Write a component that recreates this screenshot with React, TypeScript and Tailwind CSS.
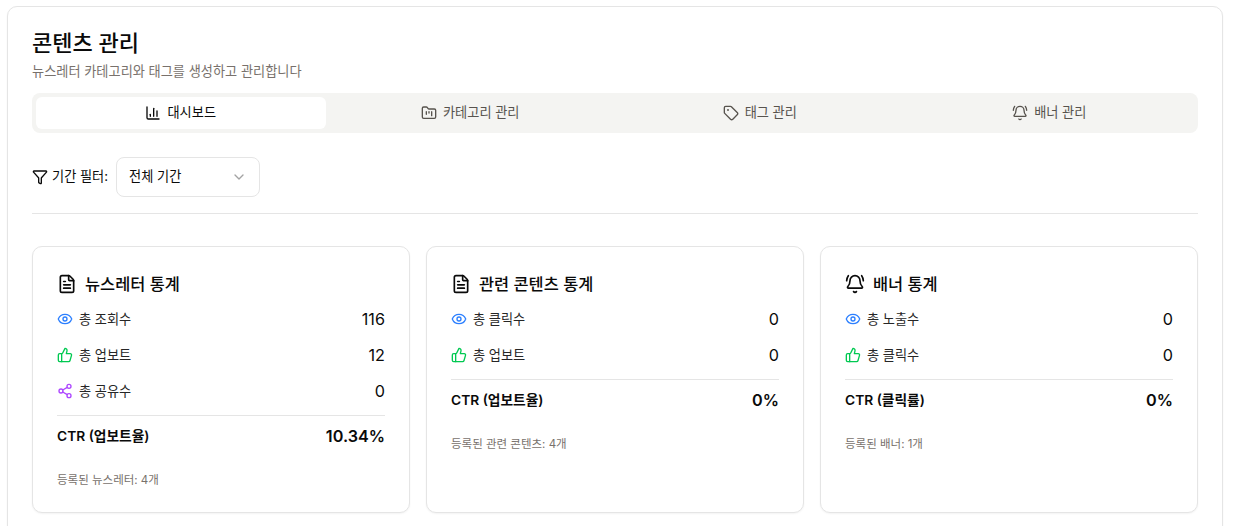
import { ChartColumn, FolderKanban, Tag, BellRing, Filter, ChevronDown, FileText, Eye, ThumbsUp, Share2 } from "lucide-react";
import type { ReactNode } from "react";

const tabs = [
  { label: "대시보드", icon: <ChartColumn className="w-4 h-4" />, active: true },
  { label: "카테고리 관리", icon: <FolderKanban className="w-4 h-4" /> },
  { label: "태그 관리", icon: <Tag className="w-4 h-4" /> },
  { label: "배너 관리", icon: <BellRing className="w-4 h-4" /> },
];

const eye = <Eye className="w-4 h-4 text-blue-500" />;
const thumb = <ThumbsUp className="w-4 h-4 text-green-500" />;
const share = <Share2 className="w-4 h-4 text-purple-500" />;

function Card({ icon, title, rows, ctrLabel, ctr, foot }: { icon: ReactNode; title: string; rows: [ReactNode, string, string][]; ctrLabel: string; ctr: string; foot: string }) {
  return (
    <div className="rounded-[10px] border border-[#e5e5e5] bg-white p-6 shadow-xs flex flex-col gap-[6px]">
      <div className="flex items-center gap-2 h-6 mt-px text-[#0a0a0a]">
        {icon}
        <h3 className="text-[16.4px] leading-6 font-medium">{title}</h3>
      </div>
      <div className="flex flex-col gap-3 mt-[5px]">
        {rows.map(([ic, label, val]) => (
          <div key={label} className="flex items-center justify-between h-6">
            <div className="flex items-center gap-[6px]">
              {ic}
              <span className="text-[13.2px] leading-5 text-[#262626]">{label}</span>
            </div>
            <span className="text-[16.2px] leading-6 font-normal text-[#0a0a0a]">{val}</span>
          </div>
        ))}
        <div className="border-t border-[#e5e5e5] pt-2 flex items-center justify-between">
          <span className="text-[13.75px] leading-6 font-semibold text-[#0a0a0a]">{ctrLabel}</span>
          <span className="text-[16.2px] leading-6 font-semibold text-[#0a0a0a]">{ctr}</span>
        </div>
      </div>
      <p className="text-[11.5px] leading-4 text-[#78716c] mt-[18px]">{foot}</p>
    </div>
  );
}

export default function App() {
  return (
    <div className="h-[526px] overflow-hidden bg-white pt-[6px] pl-[7px] pr-[11px] font-['Inter','Noto_Sans_CJK_KR',sans-serif]">
      <div className="rounded-[10px] border border-[#e5e5e5] bg-white px-6 pt-5 pb-6 shadow-xs">
        <h1 className="text-[22px] leading-8 font-medium text-[#0a0a0a]">콘텐츠 관리</h1>
        <p className="text-[13.2px] leading-5 text-[#78716c] mt-[2px]">뉴스레터 카테고리와 태그를 생성하고 관리합니다</p>
        <div className="mt-3 h-10 rounded-lg bg-[#f4f4f2] p-1 grid grid-cols-4">
          {tabs.map((t) => (
            <div key={t.label} className={`flex items-center justify-center gap-[6px] rounded-md text-[13.2px] ${t.active ? "bg-white text-[#0a0a0a]" : "text-[#57534e]"}`}>
              {t.icon}
              <span>{t.label}</span>
            </div>
          ))}
        </div>
        <div className="mt-6 pb-4 border-b border-[#e5e5e5] flex items-center gap-2">
          <div className="flex items-center gap-1 text-[13.2px] font-normal text-[#0a0a0a]">
            <Filter className="w-4 h-4" />
            <span>기간 필터:</span>
          </div>
          <div className="w-[144px] h-10 rounded-lg border border-[#e5e5e5] bg-white px-3 flex items-center justify-between text-[13.2px] text-[#0a0a0a]">
            <span>전체 기간</span>
            <ChevronDown className="w-4 h-4 text-[#a3a3a3]" />
          </div>
        </div>
        <div className="mt-8 grid grid-cols-3 gap-4 items-stretch">
          <Card
            icon={<FileText className="w-5 h-5" />}
            title="뉴스레터 통계"
            rows={[[eye, "총 조회수", "116"], [thumb, "총 업보트", "12"], [share, "총 공유수", "0"]]}
            ctrLabel="CTR (업보트율)"
            ctr="10.34%"
            foot="등록된 뉴스레터: 4개"
          />
          <Card
            icon={<FileText className="w-5 h-5" />}
            title="관련 콘텐츠 통계"
            rows={[[eye, "총 클릭수", "0"], [thumb, "총 업보트", "0"]]}
            ctrLabel="CTR (업보트율)"
            ctr="0%"
            foot="등록된 관련 콘텐츠: 4개"
          />
          <Card
            icon={<BellRing className="w-5 h-5" />}
            title="배너 통계"
            rows={[[eye, "총 노출수", "0"], [thumb, "총 클릭수", "0"]]}
            ctrLabel="CTR (클릭률)"
            ctr="0%"
            foot="등록된 배너: 1개"
          />
        </div>
      </div>
    </div>
  );
}
